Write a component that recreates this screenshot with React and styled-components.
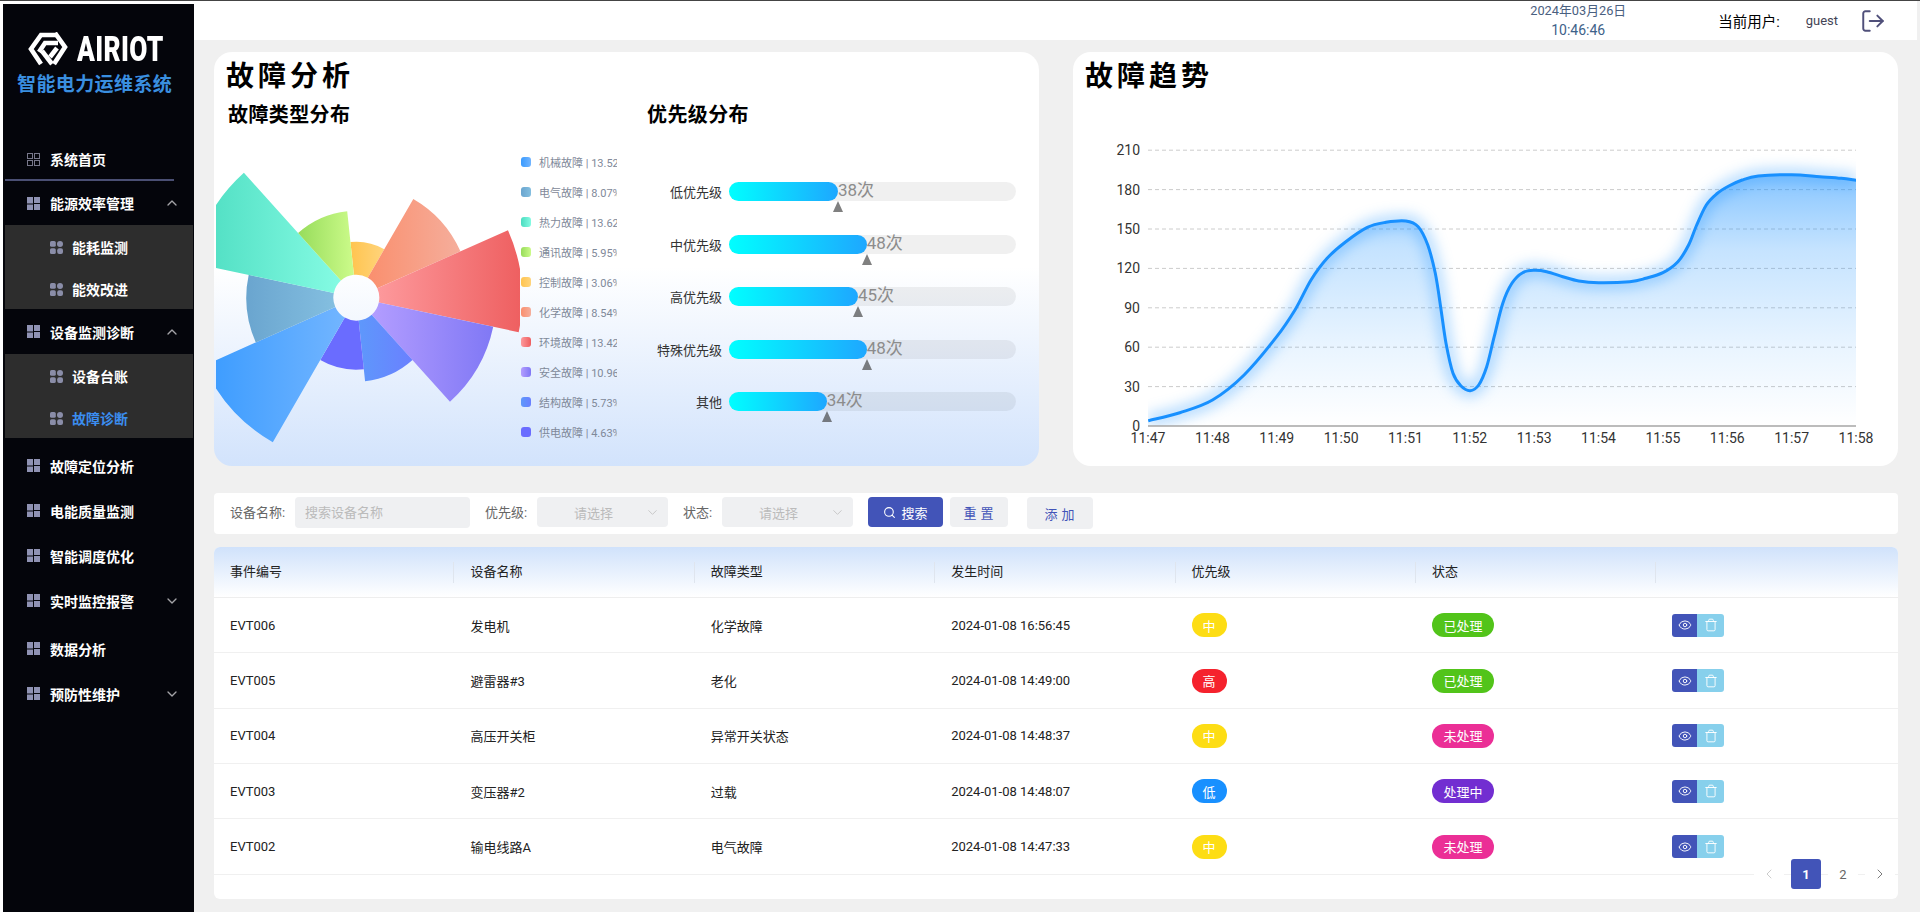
import React from "react";
import styled, { createGlobalStyle } from "styled-components";
import { ChevronDown, ChevronLeft, ChevronRight, ChevronUp, Eye, LogOut, Search, Trash } from "lucide-react";

const GlobalStyle = createGlobalStyle`
  html, body {
    margin: 0;
    padding: 0;
    background: #fff;
    font-family: Roboto, "Noto Sans CJK SC", sans-serif;
    overflow: hidden;
  }
  * { box-sizing: border-box; }
`;

const Page = styled.div`
  width: 1920px;
  height: 912px;
  display: flex;
  padding-left: 3px;
  border-top: 1px solid #444;
  background: #fff;
  overflow: hidden;
`;

/* sidebar */
const Sidebar = styled.aside`
  width: 191px;
  flex: none;
  margin-top: 3px;
  padding-top: 28px;
  background: #04050b;
  color: #fff;
`;
const Brand = styled.div`
  display: flex;
  align-items: center;
  height: 36px;
  padding-left: 25px;
`;
const BrandText = styled.span`
  margin-left: 9px;
  font-family: Roboto, sans-serif;
  font-weight: 900;
  font-size: 35px;
  line-height: 36px;
  letter-spacing: 0.5px;
  color: #fff;
  transform: scaleX(0.75);
  transform-origin: left center;
`;
const SystemName = styled.div`
  margin-top: 4px;
  padding-left: 14px;
  font-size: 19px;
  line-height: 26px;
  font-weight: 700;
  letter-spacing: 0.4px;
  color: #3a8fe0;
  white-space: nowrap;
`;
const Nav = styled.nav`
  margin-top: 41px;
  padding-left: 2px;
`;
const NavItem = styled.div`
  display: flex;
  align-items: center;
  height: ${(p) => p.$h || 45}px;
  margin-top: ${(p) => p.$top || 0}px;
  padding: 0 14px 0 22px;
  font-size: 14px;
  font-weight: 700;
  color: #fff;
`;
const NavLabel = styled.span`
  margin-left: 10px;
`;
const NavArrow = styled.span`
  display: flex;
  margin-left: auto;
  color: #a4a4a8;
`;
const NavDivider = styled.div`
  width: 169px;
  height: 2px;
  background: #4a4f73;
`;
const SubPanel = styled.div`
  width: 188px;
  height: 84px;
  padding-top: 1px;
  background: #2d2d2d;
`;
const SubItem = styled.div`
  display: flex;
  align-items: center;
  height: 42px;
  padding-left: 45px;
  font-size: 14px;
  font-weight: 700;
  color: ${(p) => (p.$active ? "#3b8df0" : "#fff")};
`;

const OutlineGridIcon = () => (
  <svg width="13" height="13" viewBox="0 0 13 13" fill="none" stroke="#77778a">
    <rect x="0.5" y="0.5" width="5" height="5" />
    <rect x="7.5" y="0.5" width="5" height="5" />
    <rect x="0.5" y="7.5" width="5" height="5" />
    <rect x="7.5" y="7.5" width="5" height="5" />
  </svg>
);
const BlockIcon = () => (
  <svg width="13" height="13" viewBox="0 0 13 13">
    <rect width="6" height="13" fill="#8f92b3" />
    <rect x="7" width="6" height="6" fill="#8f92b3" />
    <rect x="7" y="7" width="6" height="6" fill="#8f92b3" />
    <rect y="6.5" width="6" height="1" fill="#04050b" />
  </svg>
);
const DotsIcon = () => (
  <svg width="13" height="13" viewBox="0 0 13 13" style={{ marginRight: 9, flex: "none" }}>
    <rect width="5.8" height="5.8" rx="1.6" fill="#8a8da8" />
    <circle cx="10" cy="3" r="3" fill="#8a8da8" />
    <rect y="7.2" width="5.8" height="5.8" rx="1.6" fill="#8a8da8" />
    <rect x="7.2" y="7.2" width="5.8" height="5.8" rx="2" fill="#8a8da8" />
  </svg>
);
const LogoMark = () => (
  <svg width="40" height="36" viewBox="0 0 40 36" fill="none" stroke="#fff" strokeWidth="4.6">
    <polyline points="13,32 3,17 13,3 29,3" />
    <polyline points="27,1 37,15 26,32" />
    <polyline points="11,20 17,11 30,11" />
    <polyline points="14,19 24,32" />
    <polyline points="22,25 29,16" />
  </svg>
);

/* main column */
const Main = styled.main`
  flex: 1;
  min-width: 0;
  background: #f0f0f0;
`;
const TopBar = styled.header`
  display: flex;
  align-items: center;
  justify-content: flex-end;
  height: 39px;
  margin-right: 3px;
  padding-right: 31px;
  background: #fff;
`;
const Clock = styled.div`
  width: 120px;
  text-align: center;
`;
const DateText = styled.div`
  font-size: 12.8px;
  line-height: 19px;
  color: #4a6080;
`;
const TimeText = styled.div`
  font-size: 14px;
  line-height: 20px;
  color: #3e6289;
`;
const UserLabel = styled.span`
  margin-left: 80px;
  font-size: 14.5px;
  color: #000;
`;
const UserName = styled.span`
  margin-left: 26px;
  font-size: 13px;
  color: #445;
`;
const LogoutIcon = styled(LogOut)`
  margin-left: 22px;
  color: #50507a;
`;
const Content = styled.div`
  padding: 12px 22px 0 20px;
`;
const CardRow = styled.div`
  display: flex;
  gap: 34px;
`;
const Card = styled.section`
  width: 825px;
  height: 414px;
  padding-top: 8px;
  border-radius: 18px;
  background: ${(p) => (p.$tint ? "linear-gradient(to bottom, #fff 52%, #d2e3fc 100%)" : "#fff")};
  overflow: hidden;
`;
const CardTitle = styled.h2`
  margin: 0;
  padding-left: 12px;
  font-size: 28px;
  line-height: 34px;
  font-weight: 700;
  letter-spacing: 4px;
  color: #000;
`;
const Columns = styled.div`
  display: flex;
  margin-top: 7px;
`;
const TypeColumn = styled.div`
  width: 403px;
  flex: none;
  overflow: hidden;
`;
const PriorityColumn = styled.div`
  flex: 1;
`;
const SubTitle = styled.h3`
  margin: 0 0 0 ${(p) => p.$left}px;
  font-size: 20px;
  line-height: 28px;
  font-weight: 700;
  letter-spacing: 0.4px;
  color: #000;
`;
const RoseRow = styled.div`
  display: flex;
  margin-top: 19px;
  padding-left: 2px;
`;
const RoseSvg = styled.svg`
  flex: none;
  display: block;
`;
const Legend = styled.ul`
  margin: -1px 0 0 1px;
  padding: 0;
  list-style: none;
`;
const LegendItem = styled.li`
  display: flex;
  align-items: center;
  gap: 8px;
  height: 30px;
  font-size: 11px;
  color: #7f8999;
  white-space: nowrap;
`;
const Swatch = styled.i`
  width: 10px;
  height: 10px;
  border-radius: 3px;
  background: linear-gradient(to right, ${(p) => p.$from}, ${(p) => p.$to});
`;
const Bars = styled.div`
  display: flex;
  flex-direction: column;
  gap: 33.6px;
  margin-top: 53px;
`;
const BarRow = styled.div`
  display: flex;
  align-items: center;
  height: 19px;
`;
const BarLabel = styled.span`
  width: 105px;
  text-align: right;
  font-size: 13px;
  color: #333;
`;
const BarTrack = styled.div`
  width: 287px;
  height: 19px;
  margin-left: 7px;
  border-radius: 9.5px;
  background: rgba(0, 0, 0, 0.06);
`;
const BarFill = styled.div`
  position: relative;
  width: ${(p) => p.$w}px;
  height: 100%;
  border-radius: 9.5px;
  background: linear-gradient(to right, #00ffff, #1ea7ff);
`;
const BarValue = styled.span`
  position: absolute;
  left: 100%;
  top: -2px;
  font-size: 17px;
  line-height: 20px;
  color: #8c8c8c;
  white-space: nowrap;
`;
const BarMarker = styled.i`
  position: absolute;
  left: 100%;
  top: 19px;
  transform: translateX(-50%);
  border-left: 5.6px solid transparent;
  border-right: 5.6px solid transparent;
  border-bottom: 11px solid rgba(60, 60, 60, 0.65);
`;
const TrendSvg = styled.svg`
  display: block;
  margin-top: 4px;
`;
const AxisText = styled.text`
  font-family: Roboto, sans-serif;
  font-size: 14px;
  fill: #333;
`;
const TrendHalo = styled.path`
  filter: blur(7px);
`;

/* filter bar */
const FilterBar = styled.form`
  display: flex;
  align-items: flex-start;
  height: 41px;
  margin-top: 27px;
  padding: 4px 0 0 16px;
  border-radius: 4px;
  background: #fff;
`;
const FilterLabel = styled.label`
  width: ${(p) => p.$w}px;
  flex: none;
  margin-left: ${(p) => p.$left || 0}px;
  margin-right: 7px;
  font-size: 13px;
  line-height: 31px;
  color: #666;
  white-space: nowrap;
`;
const TextInput = styled.input`
  width: 175px;
  height: 31px;
  padding: 0 10px;
  border: 0;
  border-radius: 4px;
  background: #eff0f2;
  font: 13px Roboto, "Noto Sans CJK SC", sans-serif;
  &::placeholder { color: #bbb; }
`;
const SelectBox = styled.div`
  display: flex;
  align-items: center;
  justify-content: space-between;
  width: 131px;
  height: 30px;
  padding: 0 8px 0 37px;
  border-radius: 4px;
  background: #eff0f2;
  font-size: 13px;
  color: #bbb;
`;
const Button = styled.button`
  display: flex;
  align-items: center;
  justify-content: center;
  gap: 5px;
  width: ${(p) => p.$w}px;
  height: ${(p) => p.$h || 30}px;
  margin-left: ${(p) => p.$left}px;
  padding: 0 0 0 ${(p) => (p.$primary ? 0 : 3)}px;
  border: 0;
  border-radius: 4px;
  background: ${(p) => (p.$primary ? "#4254b8" : "#eff0f2")};
  color: ${(p) => (p.$primary ? "#fff" : "#4254b8")};
  font: 13px Roboto, "Noto Sans CJK SC", sans-serif;
  letter-spacing: ${(p) => (p.$primary ? 0 : 4)}px;
`;

/* table */
const TableCard = styled.div`
  position: relative;
  height: 352px;
  margin-top: 13px;
  border-radius: 6px;
  background: #fff;
  overflow: hidden;
`;
const HeadRow = styled.div`
  display: grid;
  grid-template-columns: repeat(7, 240.4px);
  height: 51px;
  border-bottom: 1px solid #eee;
  background: linear-gradient(to bottom, #d0e2fb, #fff);
`;
const HeadCell = styled.div`
  position: relative;
  padding-left: 16px;
  font-size: 13px;
  line-height: 50px;
  color: #222;
  &:not(:last-child)::after {
    content: "";
    position: absolute;
    right: 0;
    top: 15px;
    width: 1px;
    height: 21px;
    background: #dfe5ee;
  }
`;
const BodyRow = styled.div`
  display: grid;
  grid-template-columns: repeat(7, 240.4px);
  height: 55.35px;
  border-bottom: 1px solid #f0f0f0;
`;
const Cell = styled.div`
  display: flex;
  align-items: center;
  padding-left: 16px;
  font-size: 13px;
  color: #222;
`;
const Tag = styled.span`
  display: inline-flex;
  align-items: center;
  justify-content: center;
  width: ${(p) => p.$w}px;
  height: 24px;
  border-radius: 12px;
  background: ${(p) => p.$color};
  color: #fff;
  font-size: 13px;
`;
const ActionGroup = styled.div`
  display: flex;
  border-radius: 3px;
  overflow: hidden;
`;
const ActionButton = styled.span`
  display: flex;
  align-items: center;
  justify-content: center;
  width: ${(p) => p.$w}px;
  height: 23px;
  background: ${(p) => p.$color};
  color: #fff;
`;
const Pager = styled.div`
  position: absolute;
  right: 3px;
  top: 312px;
  display: flex;
  gap: 7px;
`;
const PageButton = styled.span`
  display: flex;
  align-items: center;
  justify-content: center;
  width: 30px;
  height: 30px;
  border-radius: 3px;
  background: ${(p) => (p.$active ? "#4254b8" : "#fff")};
  color: ${(p) => (p.$active ? "#fff" : p.$muted ? "#c4c4c4" : "#666")};
  font-size: 13px;
  font-weight: ${(p) => (p.$active ? 700 : 400)};
`;

/* data */
const roseData = [
  { id: "ctrl", name: "控制故障", pct: "3.06%", start: -6, r: 56, from: "#ffc44f", to: "#ffd47c" },
  { id: "chem", name: "化学故障", pct: "8.54%", start: 30, r: 114, from: "#fa8f6e", to: "#f5ae9c" },
  { id: "env", name: "环境故障", pct: "13.42%", start: 66, r: 166, from: "#fd999c", to: "#ee5f60" },
  { id: "safe", name: "安全故障", pct: "10.96%", start: 102, r: 140, from: "#b39dff", to: "#8078f5" },
  { id: "struct", name: "结构故障", pct: "5.73%", start: 138, r: 84, from: "#5e98fb", to: "#6a80ff" },
  { id: "power", name: "供电故障", pct: "4.63%", start: 174, r: 72, from: "#6a6cff", to: "#6a6cff" },
  { id: "mech", name: "机械故障", pct: "13.52%", start: 210, r: 167, from: "#3a9bff", to: "#72b5ff" },
  { id: "elec", name: "电气故障", pct: "8.07%", start: 246, r: 110, from: "#6aa5cf", to: "#84bfe0" },
  { id: "heat", name: "热力故障", pct: "13.62%", start: 282, r: 168, from: "#4bdcc0", to: "#85fbe3" },
  { id: "comm", name: "通讯故障", pct: "5.95%", start: 318, r: 87, from: "#97dc5b", to: "#ccfb8a" },
];
const legendOrder = ["mech", "elec", "heat", "comm", "ctrl", "chem", "env", "safe", "struct", "power"];
const priorities = [
  { name: "低优先级", count: 38, w: 109 },
  { name: "中优先级", count: 48, w: 137.7 },
  { name: "高优先级", count: 45, w: 129 },
  { name: "特殊优先级", count: 48, w: 137.7 },
  { name: "其他", count: 34, w: 97.7 },
];
const rows = [
  ["EVT006", "发电机", "化学故障", "2024-01-08 16:56:45", "中", "已处理"],
  ["EVT005", "避雷器#3", "老化", "2024-01-08 14:49:00", "高", "已处理"],
  ["EVT004", "高压开关柜", "异常开关状态", "2024-01-08 14:48:37", "中", "未处理"],
  ["EVT003", "变压器#2", "过载", "2024-01-08 14:48:07", "低", "处理中"],
  ["EVT002", "输电线路A", "电气故障", "2024-01-08 14:47:33", "中", "未处理"],
];
const levelColors = { 中: "#fddd14", 高: "#f5222d", 低: "#1890ff" };
const stateColors = { 已处理: "#52c41a", 未处理: "#eb2f96", 处理中: "#722ed1" };

const CX = 140.3;
const CY = 149.7;
const polar = (deg, r) => {
  const a = (deg * Math.PI) / 180;
  return `${(CX + r * Math.sin(a)).toFixed(2)} ${(CY - r * Math.cos(a)).toFixed(2)}`;
};
const sectorPath = (start, r) =>
  `M${polar(start, 23)} L${polar(start, r)} A${r} ${r} 0 0 1 ${polar(start + 36, r)} L${polar(start + 36, 23)} A23 23 0 0 0 ${polar(start, 23)} Z`;

// points read off the reference crop, horizontal 1.867x, vertical 3x
const curveRaw = [
  [146, 1112], [205, 1088], [266, 1050], [325, 975], [386, 860], [420, 780], [450, 690], [480, 625],
  [515, 575], [555, 532], [590, 517], [627, 513], [650, 530], [668, 585], [682, 670], [692, 770],
  [702, 880], [715, 970], [730, 1008], [747, 1022], [763, 1005], [778, 950], [792, 860], [808, 760],
  [825, 700], [845, 668], [867, 661], [890, 665], [920, 680], [950, 693], [987, 698], [1045, 695],
  [1075, 685], [1107, 668], [1135, 635], [1155, 585], [1170, 525], [1188, 465], [1207, 432], [1230, 408],
  [1255, 390], [1285, 378], [1347, 374], [1400, 380], [1440, 385], [1468, 391],
];
// svg sits at page (1073, 98)
const curve = curveRaw.map(([x, y]) => [1070 + x / 1.867 - 1073, 50 + y / 3 - 98]);
const smoothPath = (pts) => {
  let d = `M${pts[0][0].toFixed(1)} ${pts[0][1].toFixed(1)}`;
  for (let i = 0; i < pts.length - 1; i++) {
    const p0 = pts[i - 1] || pts[i];
    const p1 = pts[i];
    const p2 = pts[i + 1];
    const p3 = pts[i + 2] || p2;
    const c1 = [p1[0] + (p2[0] - p0[0]) / 6, p1[1] + (p2[1] - p0[1]) / 6];
    const c2 = [p2[0] - (p3[0] - p1[0]) / 6, p2[1] - (p3[1] - p1[1]) / 6];
    d += ` C${c1[0].toFixed(1)} ${c1[1].toFixed(1)} ${c2[0].toFixed(1)} ${c2[1].toFixed(1)} ${p2[0].toFixed(1)} ${p2[1].toFixed(1)}`;
  }
  return d;
};
const linePath = smoothPath(curve);
const PLOT_LEFT = 75;
const PLOT_RIGHT = 783;
const PLOT_BOTTOM = 328;
const areaPath = `${linePath} L${PLOT_RIGHT} ${PLOT_BOTTOM} L${PLOT_LEFT} ${PLOT_BOTTOM} Z`;
const yTicks = [0, 30, 60, 90, 120, 150, 180, 210];
const xTicks = ["11:47", "11:48", "11:49", "11:50", "11:51", "11:52", "11:53", "11:54", "11:55", "11:56", "11:57", "11:58"];

const Rose = () => (
  <RoseSvg width="304" height="312" viewBox="0 0 304 312">
    <defs>
      {roseData.map((s) => (
        <linearGradient key={s.id} id={`rose-${s.id}`} x1="0" y1="0" x2="1" y2="0">
          <stop offset="0" stopColor={s.from} />
          <stop offset="1" stopColor={s.to} />
        </linearGradient>
      ))}
    </defs>
    {roseData.map((s) => (
      <path key={s.id} d={sectorPath(s.start, s.r)} fill={`url(#rose-${s.id})`} />
    ))}
  </RoseSvg>
);

const Trend = () => (
  <TrendSvg width="825" height="362" viewBox="0 0 825 362">
    <defs>
      <linearGradient id="trend-fill" gradientUnits="userSpaceOnUse" x1="0" y1="76" x2="0" y2={PLOT_BOTTOM}>
        <stop offset="0" stopColor="#1890ff" stopOpacity="0.52" />
        <stop offset="0.3" stopColor="#1890ff" stopOpacity="0.25" />
        <stop offset="0.7" stopColor="#1890ff" stopOpacity="0.09" />
        <stop offset="1" stopColor="#1890ff" stopOpacity="0" />
      </linearGradient>
      <clipPath id="trend-clip">
        <rect x={PLOT_LEFT} y="40" width={PLOT_RIGHT - PLOT_LEFT} height={PLOT_BOTTOM - 40} />
      </clipPath>
    </defs>
    {yTicks.map((t) => {
      const y = PLOT_BOTTOM - (t / 30) * 39.4;
      return (
        <g key={t}>
          {t > 0 && <line x1={PLOT_LEFT} x2={PLOT_RIGHT} y1={y} y2={y} stroke="#ccc" strokeDasharray="4 3" />}
          <AxisText x="67" y={y + 5} textAnchor="end">{t}</AxisText>
        </g>
      );
    })}
    <g clipPath="url(#trend-clip)">
      <TrendHalo d={linePath} fill="none" stroke="#1890ff" strokeOpacity="0.35" strokeWidth="12" />
      <path d={areaPath} fill="url(#trend-fill)" />
      <path d={linePath} fill="none" stroke="#1890ff" strokeWidth="3" />
    </g>
    <line x1={PLOT_LEFT} x2={PLOT_RIGHT} y1={PLOT_BOTTOM} y2={PLOT_BOTTOM} stroke="#a6a6a6" strokeWidth="1.5" />
    {xTicks.map((t, i) => (
      <AxisText key={t} x={PLOT_LEFT + i * 64.36} y={PLOT_BOTTOM + 17} textAnchor="middle">{t}</AxisText>
    ))}
  </TrendSvg>
);

const App = () => {
  const byId = Object.fromEntries(roseData.map((s) => [s.id, s]));
  return (
    <Page>
      <GlobalStyle />
      <Sidebar>
        <Brand>
          <LogoMark />
          <BrandText>AIRIOT</BrandText>
        </Brand>
        <SystemName>智能电力运维系统</SystemName>
        <Nav>
          <NavItem $h={40}>
            <OutlineGridIcon />
            <NavLabel>系统首页</NavLabel>
          </NavItem>
          <NavDivider />
          <NavItem $h={44}>
            <BlockIcon />
            <NavLabel>能源效率管理</NavLabel>
            <NavArrow><ChevronUp size={16} /></NavArrow>
          </NavItem>
          <SubPanel>
            <SubItem><DotsIcon />能耗监测</SubItem>
            <SubItem><DotsIcon />能效改进</SubItem>
          </SubPanel>
          <NavItem>
            <BlockIcon />
            <NavLabel>设备监测诊断</NavLabel>
            <NavArrow><ChevronUp size={16} /></NavArrow>
          </NavItem>
          <SubPanel>
            <SubItem><DotsIcon />设备台账</SubItem>
            <SubItem $active><DotsIcon />故障诊断</SubItem>
          </SubPanel>
          <NavItem $top={5}><BlockIcon /><NavLabel>故障定位分析</NavLabel></NavItem>
          <NavItem><BlockIcon /><NavLabel>电能质量监测</NavLabel></NavItem>
          <NavItem><BlockIcon /><NavLabel>智能调度优化</NavLabel></NavItem>
          <NavItem>
            <BlockIcon />
            <NavLabel>实时监控报警</NavLabel>
            <NavArrow><ChevronDown size={16} /></NavArrow>
          </NavItem>
          <NavItem $top={3}><BlockIcon /><NavLabel>数据分析</NavLabel></NavItem>
          <NavItem>
            <BlockIcon />
            <NavLabel>预防性维护</NavLabel>
            <NavArrow><ChevronDown size={16} /></NavArrow>
          </NavItem>
        </Nav>
      </Sidebar>
      <Main>
        <TopBar>
          <Clock>
            <DateText>2024年03月26日</DateText>
            <TimeText>10:46:46</TimeText>
          </Clock>
          <UserLabel>当前用户:</UserLabel>
          <UserName>guest</UserName>
          <LogoutIcon size={26} strokeWidth={1.8} />
        </TopBar>
        <Content>
          <CardRow>
            <Card $tint>
              <CardTitle>故障分析</CardTitle>
              <Columns>
                <TypeColumn>
                  <SubTitle $left={14}>故障类型分布</SubTitle>
                  <RoseRow>
                    <Rose />
                    <Legend>
                      {legendOrder.map((id) => (
                        <LegendItem key={id}>
                          <Swatch $from={byId[id].from} $to={byId[id].to} />
                          {byId[id].name} | {byId[id].pct}
                        </LegendItem>
                      ))}
                    </Legend>
                  </RoseRow>
                </TypeColumn>
                <PriorityColumn>
                  <SubTitle $left={30}>优先级分布</SubTitle>
                  <Bars>
                    {priorities.map((p) => (
                      <BarRow key={p.name}>
                        <BarLabel>{p.name}</BarLabel>
                        <BarTrack>
                          <BarFill $w={p.w}>
                            <BarValue>{p.count}次</BarValue>
                            <BarMarker />
                          </BarFill>
                        </BarTrack>
                      </BarRow>
                    ))}
                  </Bars>
                </PriorityColumn>
              </Columns>
            </Card>
            <Card>
              <CardTitle>故障趋势</CardTitle>
              <Trend />
            </Card>
          </CardRow>
          <FilterBar>
            <FilterLabel $w={58}>设备名称:</FilterLabel>
            <TextInput placeholder="搜索设备名称" />
            <FilterLabel $w={45} $left={15}>优先级:</FilterLabel>
            <SelectBox>请选择<ChevronDown size={15} strokeWidth={1.2} /></SelectBox>
            <FilterLabel $w={32} $left={15}>状态:</FilterLabel>
            <SelectBox>请选择<ChevronDown size={15} strokeWidth={1.2} /></SelectBox>
            <Button type="button" $primary $w={75} $left={15}><Search size={13} />搜索</Button>
            <Button type="button" $w={58} $left={7}>重置</Button>
            <Button type="button" $w={66} $h={32} $left={19}>添加</Button>
          </FilterBar>
          <TableCard>
            <HeadRow>
              {["事件编号", "设备名称", "故障类型", "发生时间", "优先级", "状态", ""].map((h, i) => (
                <HeadCell key={i}>{h}</HeadCell>
              ))}
            </HeadRow>
            {rows.map((r) => (
              <BodyRow key={r[0]}>
                <Cell>{r[0]}</Cell>
                <Cell>{r[1]}</Cell>
                <Cell>{r[2]}</Cell>
                <Cell>{r[3]}</Cell>
                <Cell><Tag $w={35} $color={levelColors[r[4]]}>{r[4]}</Tag></Cell>
                <Cell><Tag $w={62} $color={stateColors[r[5]]}>{r[5]}</Tag></Cell>
                <Cell>
                  <ActionGroup>
                    <ActionButton $w={25} $color="#4254b8"><Eye size={14} strokeWidth={1.6} /></ActionButton>
                    <ActionButton $w={27} $color="#87d0ec"><Trash size={14} strokeWidth={1.6} /></ActionButton>
                  </ActionGroup>
                </Cell>
              </BodyRow>
            ))}
            <Pager>
              <PageButton $muted><ChevronLeft size={16} strokeWidth={1.3} /></PageButton>
              <PageButton $active>1</PageButton>
              <PageButton>2</PageButton>
              <PageButton><ChevronRight size={16} strokeWidth={1.3} /></PageButton>
            </Pager>
          </TableCard>
        </Content>
      </Main>
    </Page>
  );
};

export default App;
